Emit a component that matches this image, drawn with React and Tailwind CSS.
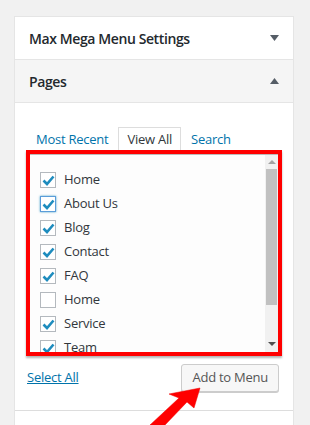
import React from "react";

const items = [
  { label: "Home", checked: true },
  { label: "About Us", checked: true, focus: true },
  { label: "Blog", checked: true },
  { label: "Contact", checked: true },
  { label: "FAQ", checked: true },
  { label: "Home", checked: false },
  { label: "Service", checked: true },
  { label: "Team", checked: true },
];

function Check({ checked, focus }) {
  return (
    <span
      className={`flex h-4 w-4 shrink-0 items-center justify-center border bg-white ${
        focus ? "border-[#5b9dd9] shadow-[0_0_2px_rgba(30,140,190,0.8)]" : "border-[#b4b9be]"
      }`}
    >
      {checked && (
        <svg width="13" height="11" viewBox="0 0 13 11">
          <path d="M1.5 5.5 L5 9 L11.5 1.5" fill="none" stroke="#1e8cbe" strokeWidth="2.6" strokeLinejoin="miter" />
        </svg>
      )}
    </span>
  );
}

function Tri({ up }) {
  return (
    <svg width="9" height="6" viewBox="0 0 9 6">
      <path d={up ? "M0 6 L4.5 0 L9 6 Z" : "M0 0 L9 0 L4.5 6 Z"} fill="#555d66" />
    </svg>
  );
}

export default function App() {
  return (
    <div className="relative h-[425px] overflow-hidden bg-[#f1f1f1] pl-[14px] pt-[16px] font-['Open_Sans',sans-serif] text-[13px] tracking-[-0.25px] text-[#32373c]">
      <div className="w-[280px] border border-[#e5e5e5] bg-white">
        <div className="flex h-[43px] items-center justify-between border-b border-[#e5e5e5] pl-[14px] pr-[14px]">
          <span className="text-[14px] font-semibold tracking-[-0.4px] text-[#23282d]">Max Mega Menu Settings</span>
          <Tri />
        </div>
        <div className="flex h-[43px] items-center justify-between border-b border-[#e5e5e5] bg-[#f5f5f5] pl-[14px] pr-[14px]">
          <span className="text-[14px] font-semibold tracking-[-0.4px] text-[#23282d]">Pages</span>
          <Tri up />
        </div>
        <div className="px-[11px] pt-[24px] pb-[18px]">
          <div className="flex h-[23px] items-end pl-[10px]">
            <span className="mr-[10px] pb-[1px] text-[#0073aa]">Most Recent</span>
            <span className="flex h-[23px] items-center border border-b-0 border-[#ddd] bg-white px-[8px] pt-[2px] text-[#32373c]">View All</span>
            <span className="ml-[10px] pb-[1px] text-[#0073aa]">Search</span>
          </div>
          <div className="h-[206px] border-4 border-[#f00] bg-[#fdfdfd] shadow-[0_2px_2px_rgba(0,0,0,0.3)]">
            <div className="flex h-full border-t border-[#bbb]">
              <div className="flex-1 overflow-hidden pl-[10px] pt-[13px]">
                {items.map((it, i) => (
                  <div key={i} className="flex h-6 items-center gap-[8px]">
                    <Check checked={it.checked} focus={it.focus} />
                    <span>{it.label}</span>
                  </div>
                ))}
              </div>
              <div className="flex w-[13px] flex-col items-center bg-[#f1f1f1]">
                <div className="flex h-[14px] items-center">
                  <svg width="8" height="4" viewBox="0 0 8 4"><path d="M0 4 L4 0 L8 4 Z" fill="#a3a3a3" /></svg>
                </div>
                <div className="h-[136px] w-[11px] bg-[#c1c1c1]" />
                <div className="flex-1" />
                <div className="flex h-[16px] items-center">
                  <svg width="8" height="4" viewBox="0 0 8 4"><path d="M0 0 L8 0 L4 4 Z" fill="#505050" /></svg>
                </div>
              </div>
            </div>
          </div>
          <div className="mt-[8px] flex items-center justify-between pr-[3px]">
            <a href="#" className="pl-[1px] text-[#0073aa] underline">Select All</a>
            <button className="h-[28px] rounded-[3px] border border-[#ccc] bg-[#f7f7f7] px-[10px] text-[#555] shadow-[0_1px_0_#ccc]">
              Add to Menu
            </button>
          </div>
        </div>
        <div className="h-[40px] border-t border-[#ddd]" />
      </div>
      <svg className="absolute left-0 top-0" width="310" height="425" viewBox="0 0 310 425">
        <polygon
          points="200,388 194,408 187,402 165,425 150,425 179,398 169,394"
          fill="#f00"
          stroke="#e00"
          strokeWidth="0.5"
        />
      </svg>
    </div>
  );
}
